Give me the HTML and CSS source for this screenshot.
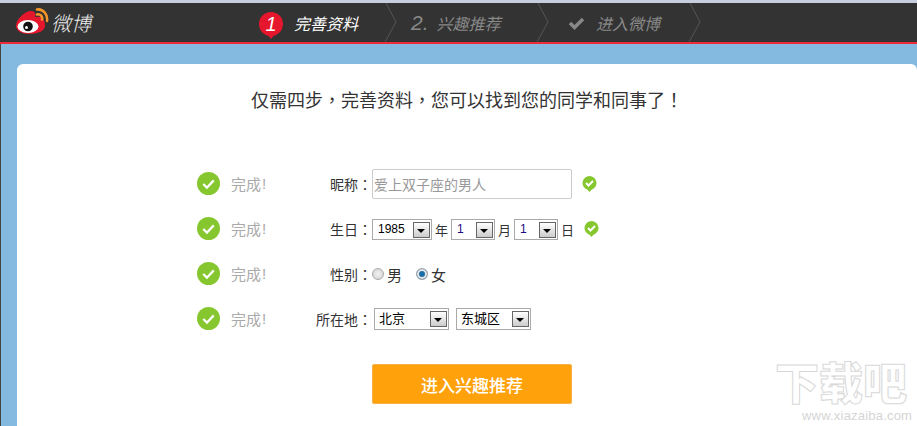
FILE: index.html
```html
<!DOCTYPE html>
<html lang="zh-CN">
<head>
    <meta charset="UTF-8">
    <title>完善资料</title>
    <link rel="stylesheet" href="styles.css">
</head>
<body>
    <header class="topbar">
        <div class="logo">
            <svg class="logo-mark" width="33" height="30" viewBox="0 0 33 30">
                <path d="M0 18C0 11 9 3 15 3c4 0 5 3 4 6 5-1 9 0 9 4 1 1 1 3 1 5 0 5-8 8-16 8C6 26 0 23 0 18z" fill="#e6162d"/>
                <ellipse cx="12" cy="18.500" rx="10.500" ry="6.500" fill="#fff"/>
                <circle cx="12" cy="18.500" r="4.800" fill="#111"/>
                <circle cx="10.500" cy="19.500" r="1.500" fill="#fff"/>
                <path d="M21 1.500c6-1 11 5 10 11.500M21 6.500c3-1 6 2 5 5" fill="none" stroke="#f5962a" stroke-width="2.500" stroke-linecap="round"/>
            </svg>
            <span class="logo-text">微博</span>
        </div>
        <ol class="steps">
            <li class="step step-active">
                <span class="pin"><i>1</i></span>
                <span class="step-name">完善资料</span>
                <svg class="chev" viewBox="0 0 12 39"><path d="M1 0l10 19L0 39"/></svg>
            </li>
            <li class="step">
                <span class="step-num">2.</span>
                <span class="step-name">兴趣推荐</span>
                <svg class="chev" viewBox="0 0 12 39"><path d="M1 0l10 19L0 39"/></svg>
            </li>
            <li class="step">
                <svg class="step-check" width="17" height="14" viewBox="0 0 17 14">
                    <path d="M2 7l4.500 4.500L15 3" fill="none" stroke="#888" stroke-width="3.500"/>
                </svg>
                <span class="step-name">进入微博</span>
                <svg class="chev" viewBox="0 0 12 39"><path d="M1 0l10 19L0 39"/></svg>
            </li>
        </ol>
    </header>

    <main class="page">
        <section class="card">
            <h1 class="title">仅需四步，完善资料，您可以找到您的同学和同事了！</h1>

            <form class="form">
                <div class="row">
                    <span class="done"><svg class="tick-big" viewBox="0 0 22 22"><circle cx="11" cy="11" r="11" fill="#86c72f"/><path d="M6 11.500l3.500 3.500L16 8" fill="none" stroke="#fff" stroke-width="2.200"/></svg>完成<b>!</b></span>
                    <label class="label">昵称：</label>
                    <div class="field">
                        <input class="text-input" type="text" value="爱上双子座的男人">
                        <svg class="tick-small" viewBox="0 0 15 16"><path d="M7.500 0a7 7 0 0 1 2 13.700L7.500 16l-2-2.300A7 7 0 0 1 7.500 0z" fill="#86c72f"/><path d="M4 7l2.500 2.500L11 5" fill="none" stroke="#fff" stroke-width="2"/></svg>
                    </div>
                </div>

                <div class="row">
                    <span class="done"><svg class="tick-big" viewBox="0 0 22 22"><circle cx="11" cy="11" r="11" fill="#86c72f"/><path d="M6 11.500l3.500 3.500L16 8" fill="none" stroke="#fff" stroke-width="2.200"/></svg>完成<b>!</b></span>
                    <label class="label">生日：</label>
                    <div class="field field-tight">
                        <span class="select sel-year">1985<i class="arrow"></i></span>
                        <span class="unit">年</span>
                        <span class="select sel-day"><em>1</em><i class="arrow"></i></span>
                        <span class="unit">月</span>
                        <span class="select sel-day"><em>1</em><i class="arrow"></i></span>
                        <span class="unit">日</span>
                        <svg class="tick-small tick-birth" viewBox="0 0 15 16"><path d="M7.500 0a7 7 0 0 1 2 13.700L7.500 16l-2-2.300A7 7 0 0 1 7.500 0z" fill="#86c72f"/><path d="M4 7l2.500 2.500L11 5" fill="none" stroke="#fff" stroke-width="2"/></svg>
                    </div>
                </div>

                <div class="row">
                    <span class="done"><svg class="tick-big" viewBox="0 0 22 22"><circle cx="11" cy="11" r="11" fill="#86c72f"/><path d="M6 11.500l3.500 3.500L16 8" fill="none" stroke="#fff" stroke-width="2.200"/></svg>完成<b>!</b></span>
                    <label class="label">性别：</label>
                    <div class="field">
                        <span class="radio"></span><span class="radio-text">男</span>
                        <span class="radio radio-on"></span><span class="radio-text">女</span>
                    </div>
                </div>

                <div class="row">
                    <span class="done"><svg class="tick-big" viewBox="0 0 22 22"><circle cx="11" cy="11" r="11" fill="#86c72f"/><path d="M6 11.500l3.500 3.500L16 8" fill="none" stroke="#fff" stroke-width="2.200"/></svg>完成<b>!</b></span>
                    <label class="label">所在地：</label>
                    <div class="field field-city">
                        <span class="select sel-city">北京<i class="arrow"></i></span>
                        <span class="select sel-city">东城区<i class="arrow"></i></span>
                    </div>
                </div>

                <div class="actions">
                    <button class="btn-next" type="button">进入兴趣推荐</button>
                </div>
            </form>
        </section>
    </main>

    <div class="watermark">
        <span class="wm-title">下载吧</span>
        <span class="wm-url">www.xiazaiba.com</span>
    </div>
</body>
</html>
```

FILE: styles.css
```css
* {
    box-sizing: border-box;
}
body {
    margin: 0;
    height: 426px;
    overflow: hidden;
    position: relative;
    font-family: "Noto Sans CJK SC", "Liberation Sans", sans-serif;
    font-size: 14px;
    color: #333;
    background: #84b9e0;
}

/* top bar */
.topbar {
    height: 44px;
    display: flex;
    background: #333;
    border-top: 3px solid #c9cde0;
    border-bottom: 2px solid #ee2a3a;
}
.logo {
    width: 258px;
    padding-left: 16px;
    display: flex;
    align-items: center;
}
.logo-text {
    margin-left: 2px;
    color: #eee;
    font-size: 20px;
    font-style: italic;
    font-weight: 300;
}
.steps {
    display: flex;
    margin: 0;
    padding: 0;
    list-style: none;
}
.step {
    position: relative;
    width: 152px;
    display: flex;
    align-items: center;
    color: #888;
    font-style: italic;
}
.chev {
    position: absolute;
    top: 0;
    right: 0;
    width: 12px;
    height: 39px;
    fill: none;
    stroke: #555;
}
.step-active {
    width: 139px;
    padding-left: 1px;
}
.pin {
    position: relative;
    width: 24px;
    height: 24px;
    margin-top: 2px;
    margin-right: 11px;
    border-radius: 50%;
    background: #e6162d;
    color: #fff;
    text-align: center;
    font-size: 20px;
    line-height: 24px;
    font-family: "Liberation Sans", sans-serif;
}
.pin::after {
    content: "";
    position: absolute;
    left: 8px;
    top: 22px;
    border: 4px solid transparent;
    border-top: 5px solid #e6162d;
    border-bottom: 0;
}
.step-active .step-name {
    color: #fff;
}
.step-name {
    font-size: 16px;
}
.step:nth-child(2) {
    padding-left: 14px;
}
.step:nth-child(3) {
    padding-left: 19px;
}
.step-num {
    margin-right: 8px;
    font-size: 21px;
    font-family: "Liberation Sans", sans-serif;
}
.step-check {
    margin-right: 11px;
}

/* main card */
.page {
    padding: 20px 0 0 16px;
    border-left: 1px solid #444;
}
.card {
    height: 362px;
    background: #fff;
    border-radius: 6px 6px 0 0;
}
/* punctuation sits in the middle of its box here, not at the left */
.title, .label {
    font-family: "Noto Sans CJK TC", sans-serif;
    font-feature-settings: "locl" 0;
}
.title {
    margin: 0;
    padding-top: 21px;
    text-align: center;
    font-size: 18px;
    font-weight: 400;
    line-height: 28px;
    color: #333;
}

/* form */
.form {
    padding: 53px 0 0 180px;
}
.row {
    height: 45px;
    display: flex;
    align-items: flex-start;
    padding-top: 2px;
}
.done {
    width: 101px;
    display: flex;
    align-items: center;
    height: 30px;
    color: #aaa;
    font-size: 15px;
}
.done b {
    font-family: "Liberation Sans", sans-serif;
    font-weight: 400;
    margin-left: 1px;
}
.tick-big {
    width: 23px;
    height: 23px;
    margin-right: 11px;
    flex: none;
}
.label {
    width: 74px;
    height: 30px;
    margin-top: 1px;
    line-height: 30px;
    text-align: right;
}
.field {
    display: flex;
    align-items: center;
    height: 30px;
    margin-top: 1px;
}
.text-input {
    width: 200px;
    height: 30px;
    padding: 0 1px;
    border: 1px solid #ccc;
    border-radius: 2px;
    font: inherit;
    color: #999;
}
.tick-small {
    width: 15px;
    height: 16px;
    margin-left: 10px;
}
.tick-birth {
    margin-left: 7px;
}
.select {
    position: relative;
    height: 21px;
    padding-left: 5px;
    line-height: 19px;
    border: 1px solid #aaa;
    background: #fff;
    color: #000;
    font-family: "Liberation Sans", "Noto Sans CJK SC", sans-serif;
    font-size: 12px;
}
.select em {
    font-style: normal;
    color: #1a0a80;
}
.sel-year {
    width: 60px;
}
.sel-day {
    width: 44px;
}
.sel-city {
    width: 75px;
    height: 22px;
    line-height: 20px;
    font-size: 13px;
    padding-left: 4px;
}
.field-city {
    gap: 7px;
    padding-left: 2px;
}
.arrow {
    position: absolute;
    top: 2px;
    right: 1px;
    width: 17px;
    height: 16px;
    border: 1px solid #666;
    background: linear-gradient(#fff, #ccc);
}
.arrow::after {
    content: "";
    position: absolute;
    left: 3px;
    top: 6px;
    border: 4px solid transparent;
    border-top: 4px solid #000;
    border-bottom: 0;
}
.unit {
    width: 19px;
    text-align: center;
    font-size: 13px;
}
.radio {
    width: 12px;
    height: 12px;
    border-radius: 50%;
    border: 1px solid #aaa;
    background: radial-gradient(#f2f2f2, #cfcfcf);
    margin-right: 3px;
}
.radio-on {
    background: #1a6fa8;
    box-shadow: inset 0 0 0 2px #e8e8e8;
    margin-left: 14px;
}
.radio-text {
    font-size: 15px;
}
.actions {
    padding: 18px 0 0 175px;
}
.btn-next {
    width: 200px;
    height: 40px;
    border: 1px solid #f6b044;
    border-radius: 2px;
    background: #ffa10a;
    color: #fff;
    font-family: inherit;
    font-size: 17px;
    font-weight: 500;
}

/* watermark over the page corner */
.watermark {
    position: absolute;
    right: 6px;
    top: 357px;
    width: 136px;
    color: #fff;
}
.wm-title {
    display: block;
    font-size: 44px;
    line-height: 48px;
    font-weight: 900;
    -webkit-text-stroke: 1px #d8d8d8;
}
.wm-url {
    display: block;
    margin: 5px 0 0 27px;
    color: #d5d5d5;
    font-family: "Liberation Sans", sans-serif;
    font-size: 13px;
    line-height: 12px;
    letter-spacing: .2px;
    white-space: nowrap;
}
```
